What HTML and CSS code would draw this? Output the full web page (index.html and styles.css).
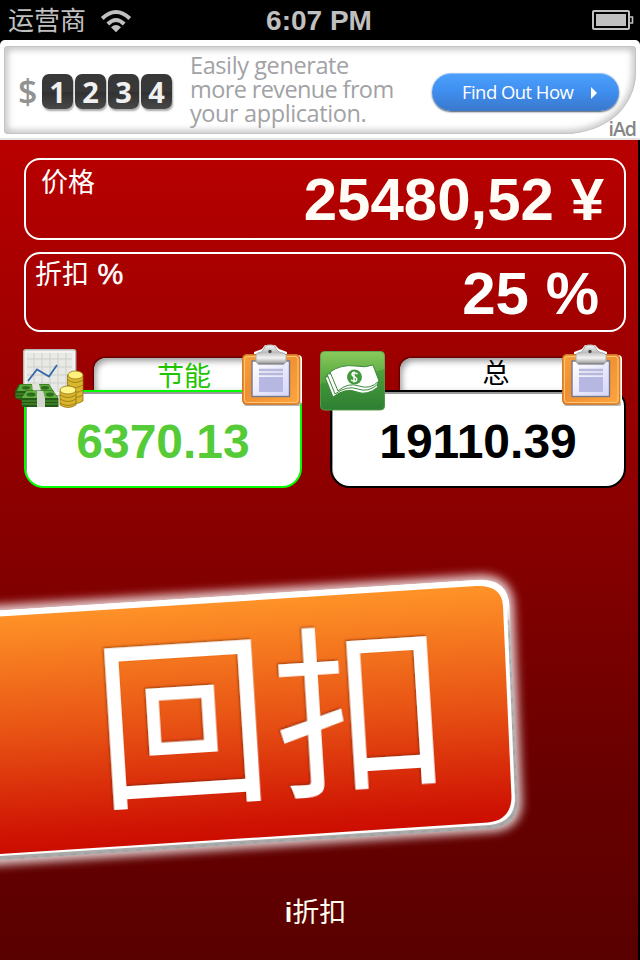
FILE: index.html
```html
<!DOCTYPE html>
<html lang="zh-CN">
<head>
<meta charset="utf-8">
<title>i折扣</title>
<link rel="stylesheet" href="styles.css">
</head>
<body>
<svg class="defs" width="0" height="0" aria-hidden="true">
  <defs>
    <linearGradient id="orange" x1="0" y1="0" x2="1" y2="1"><stop offset="0" stop-color="#f9a03c"/><stop offset=".4" stop-color="#ee8f32"/><stop offset="1" stop-color="#ffa53c"/></linearGradient>
    <linearGradient id="metal" x1="0" y1="0" x2="0" y2="1"><stop offset="0" stop-color="#f8f8f8"/><stop offset=".4" stop-color="#bdbdbd"/><stop offset=".7" stop-color="#f4f4f4"/><stop offset="1" stop-color="#999"/></linearGradient>
    <linearGradient id="paper" x1="0" y1="0" x2="1" y2="1"><stop offset="0" stop-color="#fff"/><stop offset="1" stop-color="#d5d5fb"/></linearGradient>
    <symbol id="clipboard" viewBox="0 0 60 64">
      <path d="M12 12V8l8-3 3-4h10l4 4 8 3v4z" fill="#fff"/>
      <rect x="1" y="11" width="59" height="50" rx="4" fill="#fff"/>
      <rect x="2" y="57" width="57" height="5" rx="2" fill="#999" opacity=".7"/>
      <rect x=".7" y="10.700" width="57" height="49.500" rx="4" fill="url(#orange)" stroke="#cf741f" stroke-width="1.200"/>
      <rect x="2.500" y="12.500" width="53.500" height="46" rx="3" fill="none" stroke="#ffc475"/>
      <rect x="10" y="17" width="37.500" height="35.500" fill="url(#paper)" stroke="#74788e" stroke-width="1.400"/>
      <path d="M17 26h24M17 30h24" stroke="#b8b8d8" stroke-width="2.400"/>
      <rect x="17" y="33" width="24" height="15" fill="#b7b8e2"/>
      <path d="M14 17V11q0-2 4-2.500 3-.5 4-4Q23 1 26 1h4q3 0 4 3.500 1 3.500 5 4 5 .5 5 3v6q0 2-3 2H17q-3 0-3-2.500z" fill="url(#metal)" stroke="#aaa" stroke-width="1"/>
      <circle cx="28" cy="7.500" r="1.700" fill="#444"/>
      <path d="M16 20h26" stroke="#777" stroke-width="1.200"/>
    </symbol>
  </defs>
</svg>
<div class="screen">
  <header class="status">
    <div class="carrier"><span>运营商</span>
      <svg class="wifi" viewBox="0 0 32 24" width="32" height="24"><g fill="none" stroke="#c0c0c0" stroke-width="4"><path d="M2.200 9.500Q16-3.500 29.800 9.500"/><path d="M7.800 15Q16 7 24.200 15"/></g><path d="M11 18.200Q16 13.800 21 18.200L16 23.300z" fill="#c0c0c0"/></svg>
    </div>
    <div class="clock">6:07 PM</div>
    <svg class="battery" viewBox="0 0 42 20" width="42" height="20"><rect x="1" y="1" width="36" height="18" rx="1" fill="none" stroke="#c0c0c0" stroke-width="2"/><rect x="4" y="4" width="30" height="12" fill="#c0c0c0"/><path d="M37 7h3.500v6H37" fill="none" stroke="#c0c0c0" stroke-width="1.600"/></svg>
  </header>
  <section class="ad">
    <svg class="ad-frame" viewBox="0 0 640 100" width="640" height="100">
      <defs>
        <clipPath id="adclip"><path d="M8 6H632Q636 6 636 10V32C636 65 608 94 563 94H8Q4 94 4 90V10Q4 6 8 6z"/></clipPath>
        <filter id="soft" x="-5%" y="-10%" width="110%" height="120%"><feGaussianBlur stdDeviation="3.500"/></filter>
      </defs>
      <g clip-path="url(#adclip)"><path d="M8 6H632Q636 6 636 10V32C636 65 608 94 563 94H8Q4 94 4 90V10Q4 6 8 6z" fill="none" stroke="#b4b4b4" stroke-width="6" filter="url(#soft)"/><path d="M8 6H632Q636 6 636 10V32C636 65 608 94 563 94H8Q4 94 4 90V10Q4 6 8 6z" fill="none" stroke="#c4c4c4" stroke-width="2"/></g>
    </svg>
    <div class="ad-body">
      <span class="dollar">$</span>
      <div class="digits"><b>1</b><b>2</b><b>3</b><b>4</b></div>
      <p class="pitch"><span>Easily generate</span><span class="l2">more revenue from</span><span>your application.</span></p>
      <div class="cta"><span>Find Out How</span><svg width="6" height="12" viewBox="0 0 6 12"><path d="M0 0L6 6L0 12z" fill="#fff"/></svg></div>
    </div>
    <span class="iad">iAd</span>
  </section>
  <main>
    <section class="field price"><label>价格</label><output>25480,52 ¥</output></section>
    <section class="field discount"><label>折扣 <span>%</span></label><output>25 %</output></section>
    <div class="results">
      <section class="result saved">
        <div class="tab">节能</div>
        <div class="amount">6370.13</div>
        <svg class="icon chart" viewBox="0 0 70 60" width="70" height="60">
          <rect x="8.700" y=".7" width="52" height="46" rx="2" fill="#f2f2ef" stroke="#b8b8b8" stroke-width="1.400"/>
          <rect x="11.500" y="4" width="46" height="39" fill="#e8e9e5"/>
          <path d="M19 4v39M27 4v39M35 4v39M43 4v39M51 4v39M12 10h45M12 18h45M12 26h45M12 34h45" stroke="#cdcfcb"/>
          <path d="M13 32L22 20.500L34 27.500L42 16" fill="none" stroke="#3768ac" stroke-width="1.800"/>
          <g stroke="#967510" stroke-width=".8"><path d="M52.500 26v26q8 5 15.500 0V26z" fill="#d9b62e"/><path d="M53 31q7 5 15 0M53 36q7 5 15 0M53 41q7 5 15 0M53 46q7 5 15 0" fill="none"/><ellipse cx="60.500" cy="26" rx="7.500" ry="4" fill="#fff17e"/>
          <path d="M45 42v14q8 5 16 0V42z" fill="#d9b62e"/><path d="M45 46q8 5 16 0M45 50q8 5 16 0M45 54q8 5 16 0" fill="none"/><ellipse cx="53" cy="41" rx="8" ry="4" fill="#fff58a"/></g>
          <path d="M4 35H34L39 43V50L5 51L0 49V42z" fill="#265c15"/><path d="M5 35.500H34L38 42H2z" fill="#5aa93a"/><path d="M1 45h37M1 48h37" stroke="#4d972e"/>
          <g fill="#2e6c1c"><ellipse cx="11" cy="38.700" rx="4" ry="1.800"/><ellipse cx="30" cy="38.700" rx="4" ry="1.800"/></g>
          <path d="M17 35h7l2 7h-8z" fill="#e3e3de"/>
          <path d="M11 41.500H38L43.500 49V58H7L6 49z" fill="#245916"/><path d="M11.500 42H38L43 49H6.500z" fill="#5fb03f"/><path d="M7 52h36M7 55h36" stroke="#519c34"/>
          <g fill="#2e6c1c"><ellipse cx="16" cy="45.500" rx="4.500" ry="2"/><ellipse cx="35" cy="45.500" rx="4" ry="2"/></g>
          <path d="M22 42h6l2 7v9h-8v-9z" fill="#d4d5cf"/>
        </svg>
        <svg class="icon clip"><use href="#clipboard"/></svg>
      </section>
      <section class="result total">
        <div class="tab">总</div>
        <div class="amount">19110.39</div>
        <svg class="icon cash" viewBox="0 0 66 60" width="66" height="60">
          <defs><linearGradient id="green" x1="0" y1="0" x2="0" y2="1"><stop offset="0" stop-color="#8aca5c"/><stop offset=".5" stop-color="#52a53e"/><stop offset="1" stop-color="#348038"/></linearGradient></defs>
          <rect x=".5" y=".5" width="64" height="58.500" rx="4" fill="url(#green)" stroke="#62a751"/>
          <path d="M0 33Q32 27 65 18V55q0 4-4 4H4q-4 0-4-4z" fill="#217b2b" opacity=".3"/>
          <g fill="#fff" stroke="#3c8a3a" stroke-width="1"><path d="M5 26L13 46Q26 36 37 41Q47 45 58 36L54 24z"/><path d="M7 23L15 43Q27 34 38 38Q48 42 58 33L55 20z"/><path d="M10 21L18 40Q28 31 39 35Q50 39 59 30L53 14Q45 17 36 15Q21 13 10 21z"/></g>
          <circle cx="34.500" cy="26" r="7.500" fill="#419a3c"/><path d="M37.500 23q-5-3-5.500 0 0 2 3 3 3 2 1 4-2 1-5-1M34 20.500v11" stroke="#fff" stroke-width="1.500" fill="none"/>
        </svg>
        <svg class="icon clip"><use href="#clipboard"/></svg>
      </section>
    </div>
    <svg class="sign" viewBox="0 560 640 320" width="640" height="320" role="button">
      <defs>
        <linearGradient id="fire" gradientUnits="userSpaceOnUse" x1="256" y1="597" x2="270" y2="838"><stop offset="0" stop-color="#ff9428"/><stop offset=".5" stop-color="#e85314"/><stop offset=".93" stop-color="#cf1303"/><stop offset="1" stop-color="#cb0d00"/></linearGradient>
        <linearGradient id="rim" gradientUnits="userSpaceOnUse" x1="256" y1="590" x2="272" y2="848"><stop offset="0" stop-color="#fff"/><stop offset=".12" stop-color="#fff"/><stop offset=".22" stop-color="#bbb"/><stop offset="1" stop-color="#aaa"/></linearGradient>
        <filter id="glow" x="-10%" y="-15%" width="120%" height="130%"><feGaussianBlur stdDeviation="5"/></filter>
        <filter id="edge"><feDropShadow dx="-1" dy="-1" stdDeviation="1" flood-color="#6b2000" flood-opacity=".65"/></filter>
      </defs>
      <path d="M-30 612L477 580Q508 578 509 606L517 801Q517 825 492 827L-30 862z" fill="#fff" stroke="#fff" stroke-width="10" opacity=".8" filter="url(#glow)"/>
      <path d="M-30 612.500L477 580Q508 578 509.500 606L518 801Q518 825 493 828.500L-30 862z" fill="url(#rim)"/>
      <path d="M508 620L516.500 801Q515 824 492 827L-30 861" fill="none" stroke="#999" stroke-width="2" stroke-dasharray="5 8" opacity=".5"/>
      <path d="M-30 612.500L477 580Q505 579 507 606L515 800Q514 822 490 825L-30 858z" fill="#fff"/>
      <path d="M-30 618.500L476 586Q502 585 503 606L511.500 797Q511 820 488 822.500L-30 856z" fill="url(#fire)"/>
      <text class="sign-text" transform="translate(99 796) rotate(-3.600) scale(.975 1.015)" filter="url(#edge)">回扣</text>
    </svg>
  </main>
  <footer><b>i</b>折扣</footer>
</div>
</body>
</html>
```
FILE: styles.css
```css
* { box-sizing: border-box; }
body { margin: 0; background: #000; font-family: "Liberation Sans", "Noto Sans CJK SC", sans-serif; }
.defs { position: absolute; }
.screen { width: 640px; height: 960px; overflow: hidden; display: flex; flex-direction: column; background: #000; }
.status { height: 40px; display: grid; grid-template-columns: 1fr 120px 1fr; align-items: center; color: #c0c0c0; }
.carrier { display: flex; align-items: center; gap: 15px; padding-left: 8px; font-size: 26px; line-height: 42px; }
.carrier span { width: 77px; white-space: nowrap; }
.wifi { margin-top: -1px; }
.clock { font-weight: 700; font-size: 28px; line-height: 38px; text-align: center; white-space: nowrap; margin-left: -2px; }
.battery { justify-self: end; margin-right: 6px; margin-top: -2px; }
.ad { height: 100px; position: relative; background: #fff; border-radius: 5px 5px 0 0; border-bottom: 2px solid #e4e4e4; font-family: "Open Sans", "Noto Sans", sans-serif; }
.ad-frame { position: absolute; left: 0; top: 0; }
.ad-body { position: relative; display: flex; height: 100px; align-items: flex-start; padding-left: 18px; }
.dollar { width: 24px; margin-top: 29px; font-size: 34px; line-height: 44px; font-weight: 600; color: #929292; }
.digits { display: flex; gap: 2px; margin-top: 34px; }
.digits b { width: 31px; height: 35px; border-radius: 7px; background: linear-gradient(#383838 50%, #303030 51%, #484848); box-shadow: 1px 2px 2px #aaa; color: #f0f0f0; font-size: 29px; line-height: 35px; text-align: center; }
.pitch { width: 242px; margin: 13px 0 0 18px; font-size: 23.5px; line-height: 24px; letter-spacing: -.4px; font-weight: 500; color: #a1a2a5; white-space: nowrap; }
.pitch span { display: block; height: 24px; }
.pitch .l2 { letter-spacing: -.62px; }
.cta { width: 187px; height: 38px; margin-top: 33px; border-radius: 19px; background: linear-gradient(#4ca0fb, #3f8ff0 45%, #3a78cc); border-top: 1px solid #8fc0f8; box-shadow: 0 1px 2px #456; display: flex; align-items: center; padding-left: 30px; gap: 16px; color: #fff; font-size: 18.5px; line-height: 35px; font-weight: 500; letter-spacing: -.55px; white-space: nowrap; }
.cta span { width: 113px; height: 37px; }
.iad { position: absolute; right: 4px; bottom: -2px; font-size: 19.5px; line-height: 22px; font-weight: 600; letter-spacing: -1px; color: #858585; }
main { position: relative; width: 638px; height: 740px; padding: 18px 12px 0 24px; background: linear-gradient(#b90000, #650000 90%, #610000); display: flex; flex-direction: column; flex: none; }
.field { display: flex; justify-content: space-between; border: 2px solid #fff; border-radius: 16px; color: #fff; }
.field label { font-size: 27px; line-height: 41px; }
.field label span { font-size: 29px; -webkit-text-stroke: .5px #fff; margin-left: 1px; }
.field output { font-weight: 700; font-size: 60px; line-height: 80px; color: #fffdf5; white-space: pre; }
.price { height: 82px; padding: 3px 20px 0 15px; }
.price output { margin-top: -3px; }
.discount { height: 80px; margin-top: 12px; padding: 0 25px 0 9px; }
.discount output { color: #fff; }
.results { display: grid; grid-template-columns: 278px 296px; gap: 28px; margin-top: 26px; }
.result { position: relative; height: 130px; display: flex; flex-direction: column; }
.tab { margin-left: 70px; width: 180px; height: 32px; border-radius: 12px 12px 0 0; background: #fff; box-shadow: inset 2px 3px 6px #999, -1px -1px 2px #550000; font-size: 27px; line-height: 39px; text-align: center; }
.amount { height: 98px; background: #fff; border: 2px solid; border-radius: 4px 16px 20px 20px; box-shadow: inset 1px 2px 0 #999; text-align: center; font-weight: 700; font-size: 48px; line-height: 100px; }
.saved .tab { color: #1fc400; }
.saved .amount { border-color: #0f0; color: #55cb38; }
.total .tab { width: 192px; line-height: 33px; }
.total .amount { border-color: #000; color: #000; }
.icon { position: absolute; }
.chart { left: -9px; top: -9px; }
.cash { left: -10px; top: -7px; }
.clip { width: 60px; height: 64px; top: -14px; left: 218px; }
.total .clip { left: 232px; }
.sign { position: absolute; left: 0; top: 420px; }
.sign-text { font-family: "Noto Sans CJK SC", sans-serif; font-size: 180px; letter-spacing: 4px; fill: #fff; }
footer { width: 638px; flex: 1; background: linear-gradient(#610000, #590000); color: #fffdf0; text-align: center; font-size: 27px; line-height: 66px; padding-right: 7px; }
```
